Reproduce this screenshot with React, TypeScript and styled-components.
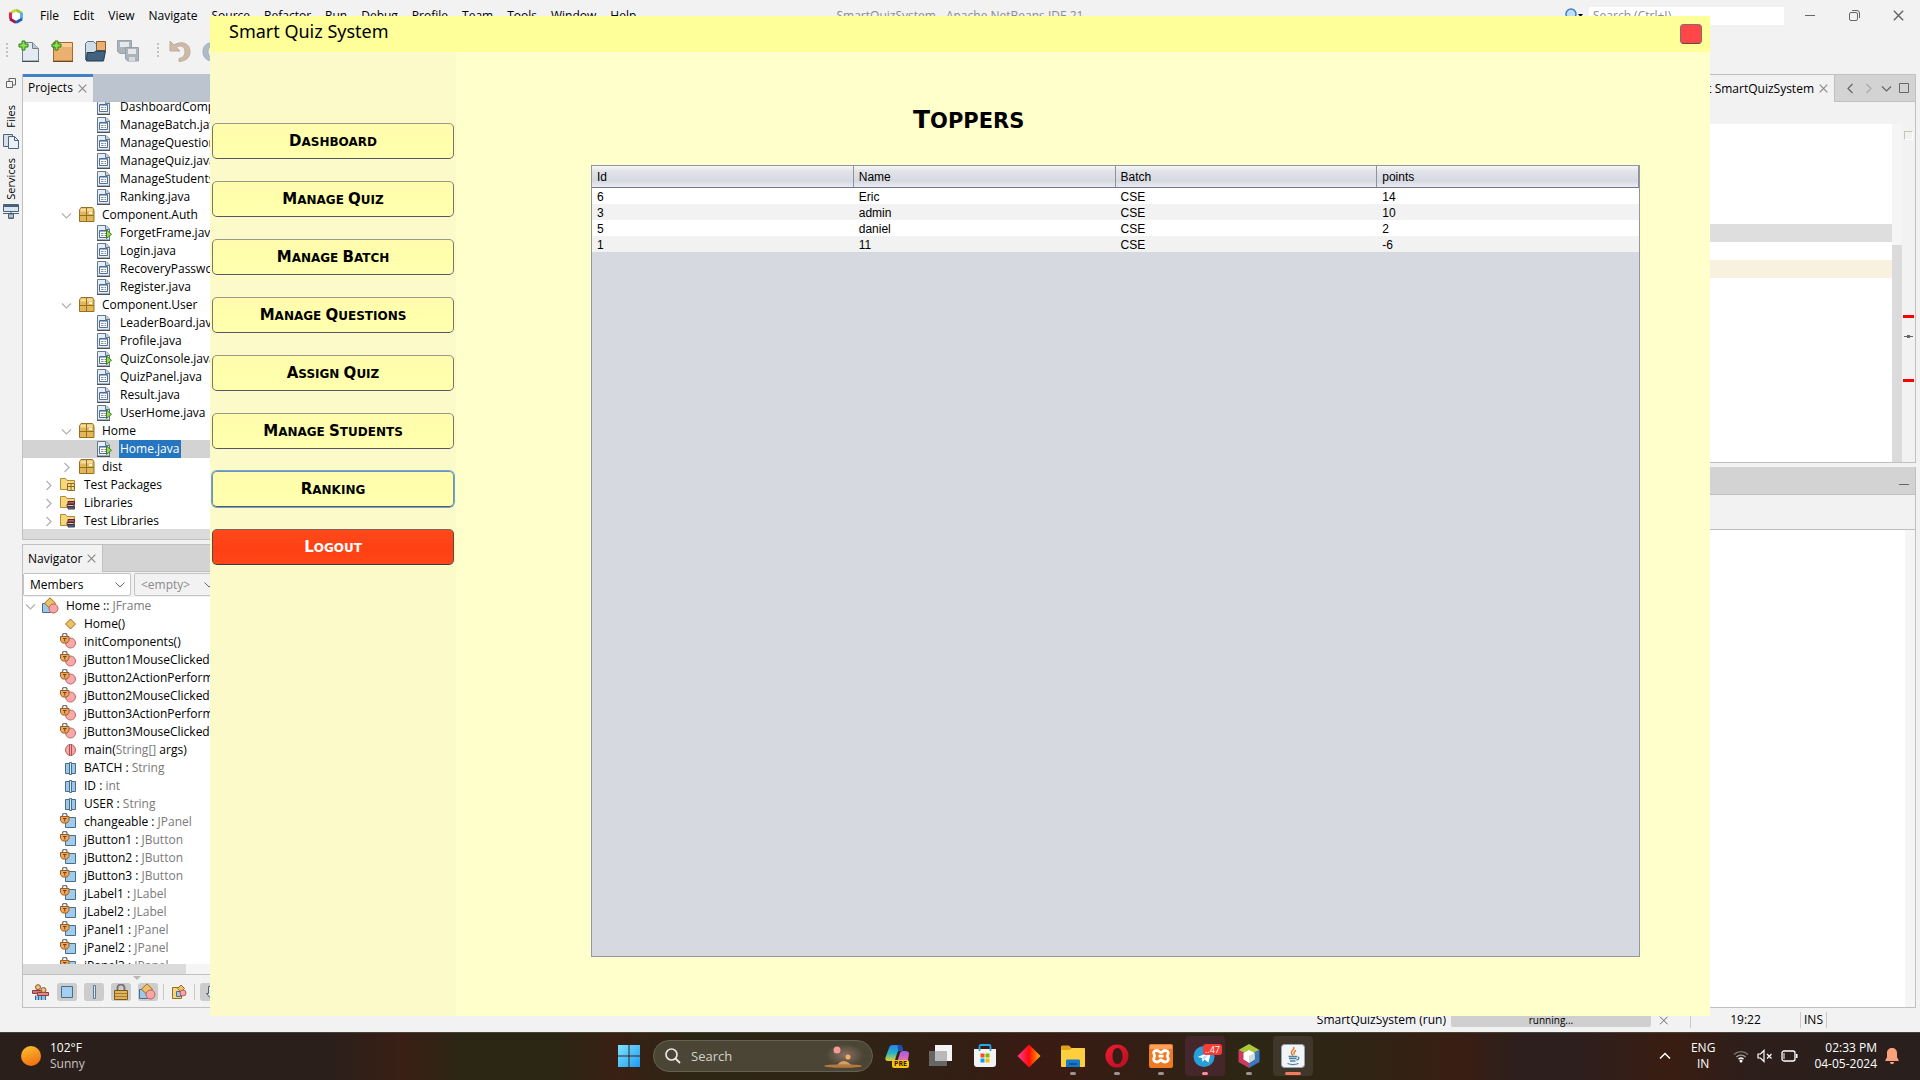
import React from "react";
import styled, { createGlobalStyle, css } from "styled-components";

const Global = createGlobalStyle`
  * { box-sizing: border-box; }
  html, body { margin: 0; }
  body {
    font-family: "Open Sans", "Noto Sans", sans-serif;
    font-size: 12px;
    line-height: 18px;
    color: #000;
    background: #f2f2f2;
  }
  button, input, select { font: inherit; color: inherit; margin: 0; }
  button { padding: 0; border: 0; background: none; }
  ul { list-style: none; margin: 0; padding: 0; }
  svg { display: block; flex: none; }
`;

/* ---------- shell ---------- */

const Desktop = styled.div`
  position: relative;
  display: flex;
  flex-direction: column;
  height: 100vh;
  min-height: 640px;
  overflow: hidden;
`;

const MenuBar = styled.header`
  display: grid;
  grid-template-columns: 1fr auto 1fr;
  align-items: center;
  height: 31px;
  flex: none;
`;

const MenuGroup = styled.nav`
  display: flex;
  align-items: center;
  gap: 14px;
  padding-left: 8px;
  & > svg { margin-right: 2px; }
`;

const MenuItem = styled.button`
  white-space: nowrap;
`;

const AppTitle = styled.span`
  color: #8c8c8c;
  white-space: pre;
`;

const MenuRight = styled.div`
  display: flex;
  align-items: center;
  justify-content: flex-end;
  height: 31px;
`;

const IdeSearch = styled.input`
  width: 195px;
  height: 18px;
  margin: 0 4px 0 5px;
  padding: 0 4px;
  border: 0;
  background: #fff;
  &::placeholder { color: #8c8c8c; opacity: 1; }
`;

const WindowControl = styled.button`
  display: grid;
  place-items: center;
  width: 44px;
  height: 30px;
`;

const ToolBar = styled.div`
  display: flex;
  align-items: center;
  gap: 9px;
  height: 43px;
  flex: none;
  padding: 0 0 4px 6px;
`;

const ToolButton = styled.button<{ $dim?: boolean }>`
  display: grid;
  place-items: center;
  width: 24px;
  height: 24px;
  opacity: ${(p) => (p.$dim ? 0.6 : 1)};
`;

const Grip = styled.span<{ $lead?: boolean }>`
  width: 2px;
  height: 16px;
  margin-left: ${(p) => (p.$lead ? "8px" : "0")};
  background: repeating-linear-gradient(#c2c2c2 0 2px, transparent 2px 4px);
`;

const Body = styled.div`
  display: flex;
  flex: 1;
  min-height: 0;
  padding-right: 4px;
`;

const SideStrip = styled.div`
  display: flex;
  flex-direction: column;
  align-items: center;
  width: 22px;
  flex: none;
  padding-top: 4px;
  & > svg { margin-bottom: 8px; }
`;

const SideTab = styled.button`
  display: flex;
  flex-direction: column;
  align-items: center;
  gap: 5px;
  margin-top: 9px;
`;

const SideLabel = styled.span`
  font-size: 11px;
  writing-mode: vertical-rl;
  transform: rotate(180deg);
`;

const LeftDock = styled.div`
  display: grid;
  grid-template-rows: 466fr 464fr;
  gap: 4px;
  width: 20%;
  flex: none;
`;

const RightDock = styled.div`
  display: grid;
  grid-template-rows: 389fr 541fr;
  gap: 4px;
  flex: 1;
  margin-left: 5px;
`;

const Panel = styled.section<{ $topLine?: boolean }>`
  display: flex;
  flex-direction: column;
  min-height: 0;
  overflow: hidden;
  border: 1px solid #c0c0c0;
  border-top-width: ${(p) => (p.$topLine ? "1px" : "0")};
`;

const TabStrip = styled.div<{ $active?: boolean; $end?: boolean; $short?: boolean }>`
  display: flex;
  justify-content: ${(p) => (p.$end ? "flex-end" : "flex-start")};
  height: ${(p) => (p.$short ? "27px" : "28px")};
  flex: none;
  background: ${(p) => (p.$active ? "#bcc5cf" : "#d3d3d3")};
  border-bottom: 1px solid #c0c0c0;
`;

const Tab = styled.div<{ $active?: boolean }>`
  display: flex;
  align-items: center;
  gap: 5px;
  padding: 0 6px 0 5px;
  background: #f2f2f2;
  border-right: 1px solid #c0c0c0;
  white-space: nowrap;
  margin-bottom: -1px;
  ${(p) => p.$active && css`box-shadow: inset 0 3px #3f83c6;`}
`;

const TabActions = styled.div`
  display: flex;
  align-items: center;
  gap: 7px;
  padding: 0 6px 0 10px;
`;

const Tree = styled.ul<{ $scrolled?: boolean }>`
  flex: 1;
  min-height: 0;
  overflow: hidden;
  background: #fff;
  & > li:first-child { margin-top: ${(p) => (p.$scrolled ? "-4px" : "0")}; }
`;

const TreeRow = styled.li<{ $level: number; $selected?: boolean }>`
  display: flex;
  align-items: center;
  height: 18px;
  padding-left: ${(p) => p.$level * 18}px;
  white-space: nowrap;
  background: ${(p) => (p.$selected ? "#d3d3d3" : "transparent")};
`;

const Twisty = styled.span`
  display: grid;
  place-items: center;
  width: 15px;
  margin-right: 4px;
`;

const RowIcon = styled.span`
  width: 18px;
  margin-right: 5px;
`;

const RowLabel = styled.span<{ $selected?: boolean }>`
  padding: 0 2px 0 1px;
  ${(p) => p.$selected && css`background: #2675bf; color: #fff;`}
`;

const Muted = styled.span`
  color: #7a7a7a;
`;

const HScroll = styled.div<{ $full?: boolean }>`
  height: 10px;
  flex: none;
  background: linear-gradient(#dbdbdb, #dbdbdb) 0 0 / ${(p) => (p.$full ? "100%" : "163px")} 10px no-repeat #f5f5f5;
`;

const FilterRow = styled.div`
  display: flex;
  gap: 3px;
  padding: 1px 0;
  flex: none;
`;

const Combo = styled.select`
  appearance: none;
  width: 108px;
  height: 23px;
  padding: 0 6px;
  border: 1px solid #c4c4c4;
  border-radius: 2px;
  background: #fff url("data:image/svg+xml,%3Csvg xmlns='http://www.w3.org/2000/svg' width='10' height='6'%3E%3Cpath d='M.5.5 5 5 9.500 .5' fill='none' stroke='%23666'/%3E%3C/svg%3E") right 5px center no-repeat;
  &:disabled {
    background-color: #f2f2f2;
    color: #8c8c8c;
    opacity: 1;
    width: 86px;
  }
`;

const FilterBar = styled.div`
  position: relative;
  display: flex;
  align-items: center;
  gap: 7px;
  height: 33px;
  flex: none;
  padding: 2px 0 0 7px;
  border-top: 1px solid #c0c0c0;
`;

const SplitterMark = styled.span`
  position: absolute;
  top: 1px;
  left: 110px;
  border: 4px solid transparent;
  border-top-color: #b8b8b8;
  border-bottom: 0;
`;

const FilterButton = styled.button<{ $on?: boolean }>`
  display: grid;
  place-items: center;
  width: 20px;
  height: 18px;
  border-radius: 3px;
  background: ${(p) => (p.$on ? "#cccccc" : "transparent")};
`;

const Divider = styled.span<{ $tight?: boolean }>`
  width: 1px;
  height: 16px;
  margin: 0 ${(p) => (p.$tight ? "-2px" : "0")};
  background: #c9c9c9;
`;

const EditorToolbar = styled.div<{ $tall?: boolean }>`
  height: ${(p) => (p.$tall ? "35px" : "22px")};
  flex: none;
  border-bottom: ${(p) => (p.$tall ? "1px solid #c0c0c0" : "0")};
`;

const EditorArea = styled.div`
  display: flex;
  flex: 1;
  min-height: 0;
`;

const CodeSheet = styled.div`
  flex: 1;
  padding-top: 100px;
  background: #fff;
`;

const CodeLine = styled.div<{ $tone?: string }>`
  height: 18px;
  background: ${(p) => p.$tone || "transparent"};
`;

const VScroll = styled.div<{ $thumb?: boolean }>`
  width: 10px;
  background: #f5f5f5;
  padding-top: 121px;
  &::after {
    content: "";
    display: ${(p) => (p.$thumb ? "block" : "none")};
    height: 100%;
    background: #dbdbdb;
  }
`;

const ErrorStripe = styled.div`
  display: flex;
  flex-direction: column;
  align-items: center;
  width: 13px;
  padding-top: 7px;
`;

const StripeBox = styled.span`
  width: 9px;
  height: 9px;
  margin-bottom: 175px;
  border: 1px solid #c9c5b4;
  border-right-color: #fff;
  border-bottom-color: #fff;
`;

const StripeMark = styled.span`
  width: 11px;
  height: 3px;
  background: #ff0000;
`;

const CaretMark = styled.span`
  width: 9px;
  height: 1px;
  margin: 18px 0 42px;
  background: #666;
  &::after {
    content: "";
    display: block;
    width: 3px;
    height: 3px;
    margin: -1px auto;
    background: #666;
  }
`;

const StatusBar = styled.footer`
  display: flex;
  align-items: center;
  justify-content: flex-end;
  height: 24px;
  flex: none;
  padding: 0 93px 0 0;
`;

const Progress = styled.div`
  width: 200px;
  height: 14px;
  margin: 0 7px 0 5px;
  border-radius: 2px;
  background: #cfcfcf;
  font-size: 10px;
  line-height: 14px;
  text-align: center;
`;

const StatusCell = styled.span<{ $w: number }>`
  width: ${(p) => p.$w}px;
  height: 16px;
  line-height: 16px;
  text-align: center;
  border-left: 1px solid #c9c9c9;
`;

/* ---------- quiz window ---------- */

const QuizWindow = styled.main`
  position: absolute;
  top: 16px;
  right: 210px;
  bottom: 64px;
  left: 210px;
  display: flex;
  flex-direction: column;
  background: #ffffcc;
`;

const QuizTitleBar = styled.header`
  display: flex;
  justify-content: space-between;
  height: 36px;
  flex: none;
  padding: 0 8px 0 19px;
  background: #ffff99;
`;

const QuizTitle = styled.span`
  font-family: "Noto Sans", sans-serif;
  font-size: 18px;
  line-height: 30px;
`;

const CloseBox = styled.button`
  width: 22px;
  height: 20px;
  margin-top: 8px;
  border: 1px solid #8a6a70;
  border-bottom-color: #5a4a50;
  border-radius: 4px;
  background: #ff4747;
`;

const QuizBody = styled.div`
  display: flex;
  flex: 1;
  min-height: 0;
`;

const QuizNav = styled.nav`
  display: flex;
  flex-direction: column;
  gap: 22px;
  width: 246px;
  flex: none;
  padding: 71px 2px 0;
  background: #fcfac8;
`;

const NavButton = styled.button<{ $danger?: boolean; $focused?: boolean }>`
  height: 36px;
  padding-top: 1px;
  border: 1px solid #6b6b6b;
  border-color: #9a9a86 #77776c #55585e;
  border-radius: 5px;
  background: linear-gradient(#fffcae, #ffffab 50%, #ffffb0);
  font-family: "DejaVu Sans", sans-serif;
  font-size: 12px;
  font-weight: 700;
  line-height: 33px;
  text-transform: uppercase;
  ${(p) =>
    p.$focused &&
    css`
      border-color: #6f94b8 #6f94b8 #55585e;
      box-shadow: 0 0 0 1px #73a4d1;
    `}
  ${(p) =>
    p.$danger &&
    css`
      color: #fff;
      border-color: #77655c #5d4743 #3c3c44;
      background: linear-gradient(#ff4a1c, #ff4013 60%, #ff4719);
    `}
`;

const Word = styled.span<{ $cap: number }>`
  display: inline-block;
  &::first-letter { font-size: ${(p) => p.$cap}px; }
`;

const QuizMain = styled.section`
  display: flex;
  flex-direction: column;
  flex: 1;
  min-width: 0;
  padding: 53px 70px 59px 135px;
`;

const Heading = styled.h1`
  margin: 0 0 30px;
  padding-left: 322px;
  font-family: "DejaVu Sans", sans-serif;
  font-size: 21px;
  font-weight: 700;
  line-height: 30px;
  text-transform: uppercase;
  height: 30px;
`;

const TableView = styled.div`
  flex: 1;
  border: 1px solid #9297a1;
  background: #d6d9e0;
`;

const Table = styled.table`
  width: 100%;
  table-layout: fixed;
  border-collapse: separate;
  border-spacing: 0;
  font-family: "Liberation Sans", Arial, sans-serif;
  font-size: 12px;
`;

const Th = styled.th`
  height: 22px;
  padding: 0 5px;
  border-right: 1px solid #8d929c;
  border-bottom: 1px solid #73768a;
  background: linear-gradient(#f6f7f9, #e1e3e8 25%, #d6d9e0 70%, #e9ecf2);
  font-weight: 400;
  line-height: 20px;
  text-align: left;
`;

const Tr = styled.tr`
  background: #fff;
  &:nth-child(even) { background: #f2f2f2; }
`;

const Td = styled.td`
  height: 16px;
  padding: 2px 5px 0;
  line-height: 14px;
`;

/* ---------- taskbar ---------- */

const TaskBar = styled.footer`
  display: grid;
  grid-template-columns: 1fr auto 1fr;
  align-items: center;
  height: 48px;
  flex: none;
  box-shadow: inset 0 1px #48423d;
  color: #fff;
  line-height: 16px;
  background: linear-gradient(90deg, #2a1f1b 0, #2b1f1b 17%, #3a1f15 21%, #2c2615 24%, #2c2615 29%, #3a2014 32%, #2d2615 36%, #2f2415 44%, #331f14 50%, #3a1b14 54%, #331f15 60%, #2d2615 65%, #2f2415 71%, #3a1e13 76%, #2d1f1d 79%, #2d1f1d 82%, #3a1d12 87%, #2d1f1b 91%, #291f1d 100%);
`;

const Weather = styled.button`
  display: flex;
  align-items: center;
  gap: 9px;
  padding-left: 21px;
  text-align: left;
`;

const Sun = styled.span`
  width: 20px;
  height: 20px;
  border-radius: 50%;
  background: linear-gradient(160deg, #f8c331, #f4650c);
`;

const Lines = styled.span<{ $align?: string; $dim?: boolean }>`
  display: flex;
  flex-direction: column;
  text-align: ${(p) => p.$align || "left"};
  & > span:last-child { color: ${(p) => (p.$dim ? "#c9c4c1" : "inherit")}; }
`;

const TaskIcons = styled.div`
  display: flex;
  align-items: center;
  gap: 4px;
  padding-left: 2px;
`;

const TaskButton = styled.button<{ $tone?: string }>`
  position: relative;
  display: grid;
  place-items: center;
  width: 40px;
  height: 40px;
  border-radius: 4px;
  background: ${(p) => p.$tone || "transparent"};
`;

const RunDot = styled.span<{ $tone?: string; $wide?: boolean }>`
  position: absolute;
  bottom: 1px;
  left: 50%;
  width: ${(p) => (p.$wide ? "16px" : "6px")};
  margin-left: ${(p) => (p.$wide ? "-8px" : "-3px")};
  height: 3px;
  border-radius: 2px;
  background: ${(p) => p.$tone || "#9b9490"};
`;

const Badge = styled.span`
  position: absolute;
  top: 8px;
  right: 3px;
  height: 11px;
  padding: 0 2px;
  border-radius: 3px;
  background: #f23c34;
  font-size: 9px;
  line-height: 11px;
`;

const PreBadge = styled.span`
  position: absolute;
  right: 8px;
  bottom: 8px;
  height: 8px;
  padding: 0 2px;
  border-radius: 2px;
  background: #fcc312;
  color: #2a2000;
  font-size: 7px;
  font-weight: 700;
  line-height: 8px;
`;

const TaskSearch = styled.label`
  display: flex;
  align-items: center;
  gap: 10px;
  width: 220px;
  height: 32px;
  padding: 0 8px 0 11px;
  border: 1px solid #666052;
  border-radius: 16px;
  background: #4a4535;
`;

const TaskSearchInput = styled.input`
  flex: 1;
  min-width: 0;
  border: 0;
  padding: 0;
  background: transparent;
  outline: 0;
  font-size: 13px;
  &::placeholder { color: #d5d2cb; opacity: 1; }
`;

const Tray = styled.div`
  display: flex;
  align-items: center;
  justify-content: flex-end;
  padding-right: 21px;
`;

const TrayGroup = styled.div`
  display: flex;
  align-items: center;
  gap: 8px;
  margin: 0 16px 0 18px;
`;

const TrayLang = styled(Lines)`
  margin-left: 20px;
`;

const Bell = styled.span`
  margin-left: 8px;
`;

/* ---------- drawings ---------- */

const stroke = { fill: "none", stroke: "#666", strokeWidth: 1 };

const Cross = ({ size = 9, color = "#8a8a8a" }: { size?: number; color?: string }) => (
  <svg width={size} height={size} viewBox="0 0 9 9">
    <path d="M.7.7l7.600 7.600M8.300.7L.7 8.300" fill="none" stroke={color} strokeWidth="1.200" />
  </svg>
);

const Chevron = ({ dir, color = "#b0b0b0" }: { dir: "down" | "right" | "left"; color?: string }) => {
  const d = { down: "M1 3.500l4.500 4.500 4.500-4.500", right: "M3.500 1l4.500 4.500-4.500 4.500", left: "M7.500 1L3 5.500 7.500 10" }[dir];
  return (
    <svg width="11" height="11" viewBox="0 0 11 11">
      <path d={d} fill="none" stroke={color} strokeWidth="1.200" />
    </svg>
  );
};

const NetBeansMark = ({ size = 16 }: { size?: number }) => (
  <svg width={size} height={size} viewBox="0 0 16 16">
    <path d="M8 2L13.500 5" stroke="#a6c738" strokeWidth="3" />
    <path d="M8 2L2.500 5" stroke="#c5dc3a" strokeWidth="3" />
    <path d="M2.500 4.500V11" stroke="#e0235c" strokeWidth="3" />
    <path d="M2 11l6 3.500" stroke="#9b1850" strokeWidth="3" />
    <path d="M13.500 4.500V11" stroke="#54b3ee" strokeWidth="3" />
    <path d="M14 11l-6 3.500" stroke="#1d5fb8" strokeWidth="3" />
    <path d="M8 4l4 2v4l-4 2.500L4 10V6z" fill="#fff" />
  </svg>
);

const Plus = () => (
  <path d="M4 1h3v3h3v3H7v3H4V7H1V4h3z" fill="#8ae052" stroke="#2f7d12" />
);

const NewFileIcon = () => (
  <svg width="22" height="22" viewBox="0 0 22 22">
    <path d="M4.500 2.500h10l6 6v12.500h-16z" fill="#e3eaf1" stroke="#73808c" />
    <path d="M14.500 2.500v6h6" fill="#b8c9d8" stroke="#73808c" />
    <path d="M4 21.500h17" stroke="#454f58" />
    <Plus />
  </svg>
);

const NewProjectIcon = () => (
  <svg width="22" height="22" viewBox="0 0 22 22">
    <path d="M2.500 2.500h19v18.500h-19z" fill="#eab06f" stroke="#a9682b" />
    <path d="M3 3h18v4H3z" fill="#f4cf98" />
    <path d="M2 21.500h20" stroke="#6b4520" />
    <Plus />
  </svg>
);

const OpenIcon = () => (
  <svg width="22" height="22" viewBox="0 0 22 22">
    <path d="M1.500 20V3.500l2-2h6l2 2h3V14" fill="#cfdde8" stroke="#5b7285" />
    <path d="M12.500 1.500h9v9h-9z" fill="#eab06f" stroke="#8a5a2b" />
    <path d="M3 12.500h7l2-1.500h9.500l-2 10h-17z" fill="#41637f" stroke="#1e3950" />
  </svg>
);

const SaveAllIcon = () => (
  <svg width="22" height="22" viewBox="0 0 22 22">
    <path d="M.5.5h14v13H3l-2.500-2z" fill="#7d8c99" stroke="#5f6c78" />
    <path d="M3 2h9v5H3z" fill="#dfe3e6" />
    <path d="M8.500 7.500h13v13.500H11l-2.500-2z" fill="#7d8c99" stroke="#5f6c78" />
    <path d="M11 9h8v5h-8z" fill="#dfe3e6" />
    <path d="M12 17h6v4h-6z" fill="#c3cad0" />
  </svg>
);

const UndoIcon = ({ flip }: { flip?: boolean }) => (
  <svg width="22" height="22" viewBox="0 0 22 22">
    <g transform={flip ? "translate(22 0) scale(-1 1)" : undefined}>
      <path d="M1 1v10h10L7.500 7.500C12 4 16 7 16 11.500c0 4-2 6-6 7v3c7-.5 11-4 11-10C21 3 12 .5 5 5z" fill={flip ? "#7e99ae" : "#b59878"} stroke={flip ? "#6a8295" : "#9a7d5c"} />
    </g>
  </svg>
);

const FilesIcon = () => (
  <svg width="16" height="16" viewBox="0 0 16 16">
    <path d="M.5 1.500h9v12h-9z" fill="#d5e0ea" stroke="#4f6577" />
    <path d="M5.500 3.500h6l4 4v8h-10z" fill="#e8eff5" stroke="#4f6577" />
    <path d="M11.500 3.500v4h4" fill="none" stroke="#4f6577" />
  </svg>
);

const ServicesIcon = () => (
  <svg width="16" height="16" viewBox="0 0 16 16">
    <path d="M.5.5h15v7H.5z" fill="#dce5ed" stroke="#46637a" />
    <path d="M1 1h14v2H1z" fill="#46637a" />
    <path d="M0 9.500h16M8 7v6M5 11.500h6M5.500 14.500h5" stroke="#46637a" />
    <path d="M5.500 10h5v4h-5z" fill="#b4c6d5" stroke="#46637a" />
  </svg>
);

type IconKind =
  | "java" | "main" | "package" | "testFolder" | "libFolder"
  | "class" | "ctor" | "privMethod" | "staticMethod" | "staticField" | "privField";

const Lock = () => (
  <>
    <path d="M2.500 4.500V2.500a2 2 0 014.500 0V4.500" fill="none" stroke="#767676" strokeWidth="1.300" />
    <path d="M.5 3.500h8.500v4l-2 2.500h-4.500l-2-2.500z" fill="#eba765" stroke="#9a5f14" />
    <path d="M3 5.500h3.500M4.750 5.500v3" stroke="#7c3f10" />
  </>
);

const TreeIcon = ({ kind }: { kind: IconKind }) => {
  let body: React.ReactNode = null;
  if (kind === "java" || kind === "main") {
    body = (
      <>
        <path d="M1.500 1.500h8.500l3.500 3.500v11h-12z" fill="#e6edf3" stroke="#66798a" />
        <path d="M9.500 1.500v4h4" fill="#c4d3e0" stroke="#66798a" />
        <path d="M3.500 6.500h8v7h-8z" fill="#fff" stroke="#4c6f99" />
        <path d="M4 7.500h7" stroke="#8fb2d6" />
        <path d="M5 9.500h2.500M8.500 9.500H10M5 11.500h2.500M8.500 11.500H10" stroke="#8a8a8a" />
        <path d="M1 16.500h13" stroke="#49545e" />
        {kind === "main" && <path d="M10.500 6v8.500l5-4.200z" fill="#8fdc5a" stroke="#3a7d1a" />}
      </>
    );
  } else if (kind === "package") {
    body = (
      <>
        <path d="M1.500 4l1.500-2.500h11.500l1.500 2.500v11.500h-14.500z" fill="#e2b659" stroke="#94701f" />
        <path d="M2.500 2.500h12v3h-12z" fill="#f4dc9f" />
        <path d="M8.500 2v13M1.500 9.500H16" stroke="#94701f" />
        <path d="M11 6h3v2h-3z" fill="#fff6da" />
      </>
    );
  } else if (kind === "testFolder" || kind === "libFolder") {
    body = (
      <>
        <path d="M.5 13.500v-11h5l1.500 2h7.500v9z" fill="#f7d67c" stroke="#b28a30" />
        {kind === "testFolder" ? (
          <>
            <path d="M7.500 7.500h7v7h-7z" fill="#f6dc96" stroke="#8a6a1c" />
            <path d="M11 7v8M7 10.500h8" stroke="#8a6a1c" />
          </>
        ) : (
          <>
            <path d="M8 7.500h6.500v2.500H8z" fill="#c2566a" stroke="#4c2a36" />
            <path d="M7 10.500h7v2H7z" fill="#e2c7a0" stroke="#4c2a36" />
            <path d="M8 13h6.500v2H8z" fill="#65739a" stroke="#333b59" />
          </>
        )}
      </>
    );
  } else if (kind === "class") {
    body = (
      <>
        <path d="M.5 6.500h8v9h-8z" fill="#9cc8ec" stroke="#4a6c88" />
        <path d="M8 .8l5.500 5.400L8 11.600 2.500 6.200z" fill="#ecc067" stroke="#9a6d17" />
        <circle cx="11.500" cy="11.500" r="4.500" fill="#f9a5a5" stroke="#bd5c5c" />
      </>
    );
  } else if (kind === "ctor") {
    body = <path d="M10.500 4l5 5-5 5-5-5z" fill="#ecc067" stroke="#9a6d17" />;
  } else if (kind === "privMethod") {
    body = (
      <>
        <circle cx="10.500" cy="10" r="5" fill="#f9a9a9" stroke="#b66" />
        <Lock />
      </>
    );
  } else if (kind === "staticMethod") {
    body = (
      <>
        <ellipse cx="10.500" cy="9" rx="5" ry="5.500" fill="#f9a5a5" stroke="#b66" />
        <path d="M9.500 3v12M11.500 3v12" stroke="#a25555" />
      </>
    );
  } else if (kind === "staticField") {
    body = (
      <>
        <path d="M5.500 4.500h4v10h-4zM11.500 4.500h4v10h-4z" fill="#9cc8ec" stroke="#4a6c88" />
        <path d="M9.500 3.500h2v12h-2z" fill="#d7e9f7" stroke="#4a6c88" />
      </>
    );
  } else {
    body = (
      <>
        <path d="M5.500 4.500h10v10h-10z" fill="#9fcbee" stroke="#4a6c88" />
        <Lock />
      </>
    );
  }
  return <svg width="18" height="18" viewBox="0 0 18 18">{body}</svg>;
};

const InheritIcon = () => (
  <svg width="17" height="17" viewBox="0 0 17 17">
    <path d="M3 11h11v5H3z" fill="#8fc1ea" />
    <path d="M3.500 12v4M6.500 12v4M9.500 12v4M13.500 12v4" stroke="#3d678a" />
    <path d="M.5 6.500h10v3H.5z" fill="#d97474" stroke="#8d3c3c" />
    <path d="M5.500 8.500h11v3h-11z" fill="#e08a8a" stroke="#8d3c3c" />
    <circle cx="6" cy="3.200" r="2.500" fill="#eebf86" stroke="#8a5a26" />
    <circle cx="11.500" cy="6" r="2.500" fill="#eebf86" stroke="#8a5a26" />
  </svg>
);

const PadlockIcon = () => (
  <svg width="16" height="17" viewBox="0 0 16 17">
    <path d="M4.500 7V4a3.500 3.500 0 017 0v3" fill="none" stroke="#777" strokeWidth="2" />
    <path d="M1.500 6.500h13v9h-13z" fill="#e0b35a" stroke="#7f5a14" />
    <path d="M2 9.500h12M2 12.500h12" stroke="#a97c2b" />
  </svg>
);

const SquareIcon = () => (
  <svg width="12" height="12" viewBox="0 0 12 12"><path d="M.5.5h11v11H.5z" fill="#a5cff0" stroke="#4a6c88" /></svg>
);

const BarIcon = () => (
  <svg width="5" height="14" viewBox="0 0 5 14"><path d="M1.500.5h2v13h-2z" fill="#d7e9f7" stroke="#5b7b95" /></svg>
);

const SortClassIcon = () => (
  <svg width="16" height="16" viewBox="0 0 16 16">
    <path d="M1.500 3.500h9v11h-9z" fill="#f3d489" stroke="#9a6d17" />
    <path d="M5.500 7.500h4v5h-4z" fill="#9cc8ec" stroke="#4a6c88" />
    <path d="M10 1l3.500 3.500L10 8 6.500 4.500z" fill="#ecc067" stroke="#9a6d17" />
    <circle cx="12" cy="9" r="3" fill="#f9a5a5" stroke="#bd5c5c" />
  </svg>
);

const ArrowDownIcon = () => (
  <svg width="10" height="14" viewBox="0 0 10 14">
    <path d="M3.500 1.500h3v7h2l-3.500 4-3.500-4h2z" fill="#dfe9f1" stroke="#46637a" />
  </svg>
);

const StartIcon = () => (
  <svg width="24" height="24" viewBox="0 0 24 24">
    <defs>
      <linearGradient id="win" x1="0" y1="0" x2="1" y2="1" gradientUnits="objectBoundingBox">
        <stop offset="0" stopColor="#7fe3ff" /><stop offset="1" stopColor="#1c9bf5" />
      </linearGradient>
    </defs>
    <path d="M1 1h10.500v10.500H1zM12.500 1H23v10.500H12.500zM1 12.500h10.500V23H1zM12.500 12.500H23V23H12.500z" fill="url(#win)" />
  </svg>
);

const SearchArt = () => (
  <svg width="46" height="28" viewBox="0 0 46 28">
    <defs>
      <radialGradient id="haze"><stop offset="0" stopColor="#8a7064" /><stop offset="1" stopColor="#8a7064" stopOpacity="0" /></radialGradient>
    </defs>
    <ellipse cx="27" cy="13" rx="19" ry="11" fill="url(#haze)" />
    <circle cx="19" cy="8" r="3.500" fill="#f69a96" />
    <circle cx="30" cy="15" r="2.500" fill="#f3b060" />
    <path d="M19 24c1-3 4-5 7-5s6 3 9 5z" fill="#d6a062" />
    <ellipse cx="25" cy="24" rx="19" ry="1.800" fill="#b5793f" />
  </svg>
);

const CopilotIcon = () => (
  <svg width="24" height="24" viewBox="0 0 24 24">
    <defs>
      <linearGradient id="cpa" x1="0" y1="0" x2="0" y2="1"><stop offset="0" stopColor="#2b7fe8" /><stop offset=".5" stopColor="#22b5c4" /><stop offset="1" stopColor="#e6cf2e" /></linearGradient>
      <linearGradient id="cpb" x1="0" y1="0" x2="0" y2="1"><stop offset="0" stopColor="#a05ce8" /><stop offset="1" stopColor="#f06fa8" /></linearGradient>
    </defs>
    <path d="M7.500 1h7c2 0 2.500 1 3 3.500l.5 2h-2.500c-2 0-3 1-3.500 3l-1.500 5c-.5 2-1 2.500-3 2.500H3c-2.500 0-3-1.500-2.500-3.500L4 4c.7-2 1.500-3 3.500-3z" fill="url(#cpa)" />
    <path d="M12.500 1h2c2 0 2.500 1 3 3.500l.5 2h-2.500c-1 0-1.700.3-2.300.8z" fill="#1b4fb5" />
    <path d="M18 7h2.500c3 0 3.800 1.500 3.300 4l-1 6H12.500l2.500-8c.3-1 1-2 3-2z" fill="url(#cpb)" />
  </svg>
);

const TaskViewIcon = () => (
  <svg width="24" height="24" viewBox="0 0 24 24">
    <path d="M6 1h17v16H6z" fill="#f4f4f4" />
    <path d="M0 7h18v15H0z" fill="#6e6e6e" opacity=".9" />
    <path d="M6 7h12v10H6z" fill="#b9b9b9" />
  </svg>
);

const StoreIcon = () => (
  <svg width="24" height="24" viewBox="0 0 24 24">
    <path d="M1 5h22v15c0 2-1 3-3 3H4c-2 0-3-1-3-3z" fill="#f3f3f3" />
    <path d="M6.500 7V2.500C6.500 1.500 7 1 8 1h8c1 0 1.500.5 1.500 1.500V7" fill="none" stroke="#25a7e8" strokeWidth="1.800" />
    <path d="M7.500 9.500h4v4h-4z" fill="#f25022" /><path d="M12.500 9.500h4v4h-4z" fill="#7fba00" />
    <path d="M7.500 14.500h4v4h-4z" fill="#00a4ef" /><path d="M12.500 14.500h4v4h-4z" fill="#ffb900" />
  </svg>
);

const DiamondIcon = () => (
  <svg width="24" height="24" viewBox="0 0 24 24">
    <defs><linearGradient id="dia"><stop offset="0" stopColor="#ff3c9a" /><stop offset=".5" stopColor="#ff0a0a" /><stop offset="1" stopColor="#ffb300" /></linearGradient></defs>
    <path d="M12 .5L23.500 12 12 23.500.5 12z" fill="url(#dia)" />
  </svg>
);

const FolderIcon = () => (
  <svg width="24" height="24" viewBox="0 0 24 24">
    <path d="M0 3c0-1 .5-1.500 1.500-1.500H8L10.500 4H23v8H0z" fill="#e0a31a" />
    <path d="M0 6h9l2-2h12c.6 0 1 .4 1 1v17c0 .6-.4 1-1 1H1c-.6 0-1-.4-1-1z" fill="#fbcf3e" />
    <path d="M5 23v-6c0-1 .7-1.500 1.500-1.500h11c.8 0 1.500.5 1.500 1.500v6z" fill="#1878c9" />
    <path d="M8 20h8" stroke="#0d569a" strokeWidth="2" />
  </svg>
);

const OperaIcon = () => (
  <svg width="24" height="24" viewBox="0 0 24 24">
    <defs><linearGradient id="op" x1="0" y1="0" x2="1" y2="1"><stop offset="0" stopColor="#f51c2f" /><stop offset="1" stopColor="#b01020" /></linearGradient></defs>
    <path d="M14 1c5 1 9 5.500 9 11s-4 10-9 11c3-1.500 5.500-5.500 5.500-11S17 2.500 14 1z" fill="#e8626b" />
    <path fillRule="evenodd" d="M12 .5A11.500 11.500 0 1012 23.500 11.500 11.500 0 0012 .5zM12.500 4C15.500 4 17.500 7.500 17.500 12s-2 8-5 8-5-3.500-5-8 2-8 5-8z" fill="url(#op)" />
  </svg>
);

const XamppIcon = () => (
  <svg width="24" height="24" viewBox="0 0 24 24">
    <rect width="24" height="24" rx="2" fill="#f07a22" />
    <rect x="1" y="1" width="22" height="4" fill="#f8a15c" />
    <path d="M8 6.500c-3 0-4 2-3 3.500s1 2.500 0 4 0 4 3 4 2.500-2 4-2 1 2 4 2 4-2.500 3-4-1-2.500 0-4-.5-3.500-3-3.500-2.500 2-4 2-1.500-2-4-2zM9.500 12.200h5" fill="none" stroke="#fff" strokeWidth="2.800" />
  </svg>
);

const TelegramIcon = () => (
  <svg width="24" height="24" viewBox="0 0 24 24">
    <circle cx="11" cy="12.500" r="10.500" fill="#279fd8" />
    <path d="M4.500 13L18 7.500 15.500 18.500 11.500 15.500 9.500 18 9 14z" fill="#fff" />
    <path d="M9 14l7-5-4.500 6.500z" fill="#b9dcef" />
  </svg>
);

const CubeIcon = () => (
  <svg width="24" height="24" viewBox="0 0 24 24">
    <path d="M12 0l10.500 6L12 11.500 1.500 6z" fill="#a9c83c" />
    <path d="M1.500 6L7 8.500V16l5 3v5L1.500 18z" fill="#cc3a5c" />
    <path d="M22.500 6L17 8.500V16l-5 3v5l10.500-6z" fill="#3a79c2" />
    <path d="M12 6l5.500 3v6.500L12 19l-5.500-3.500V9z" fill="#fff" />
    <path d="M12 12l5.500-3v6.500L12 19z" fill="#d4dcd3" />
  </svg>
);

const JavaIcon = () => (
  <svg width="24" height="24" viewBox="0 0 24 24">
    <rect x=".5" y=".5" width="23" height="23" rx="3" fill="#f2f5f8" stroke="#93a5b5" />
    <path d="M12.500 3c2 2.500-3.500 4-2 6.500l1.500 2M15 6.500c-2 1-2.500 2.500-1.500 4" fill="none" stroke="#e57a24" strokeWidth="1.400" />
    <path d="M7.500 12.500h8.500M8 14.500h7.500M9 17h5.500M16.500 13c2 0 2 2.500-1 3M6.500 19.500c3 1.200 8 1.200 11 0" fill="none" stroke="#5382a1" strokeWidth="1.300" />
  </svg>
);

const WifiIcon = () => (
  <svg width="16" height="14" viewBox="0 0 16 14">
    <path d="M1 5.500a10 10 0 0114 0" fill="none" stroke="#7f7672" strokeWidth="1.300" />
    <path d="M3.300 8a6.700 6.700 0 019.400 0" fill="none" stroke="#a39b97" strokeWidth="1.300" />
    <path d="M5.500 10.200a3.600 3.600 0 015 0" fill="none" stroke="#fff" strokeWidth="1.400" />
    <circle cx="8" cy="12" r="1.500" fill="#fff" />
  </svg>
);

const MuteIcon = () => (
  <svg width="16" height="14" viewBox="0 0 16 14">
    <path d="M1 5h2.500L7 1.500v11L3.500 9H1z" fill="none" stroke="#fff" strokeWidth="1.200" />
    <path d="M10 5l4.500 4.500M14.500 5L10 9.500" stroke="#fff" strokeWidth="1.200" />
  </svg>
);

const BatteryIcon = () => (
  <svg width="17" height="14" viewBox="0 0 17 14">
    <rect x="1" y="2" width="13" height="10" rx="2" fill="none" stroke="#fff" strokeWidth="1.300" />
    <path d="M15.800 5v4" stroke="#fff" strokeWidth="1.500" /><path d="M3 4v6" stroke="#fff" />
  </svg>
);

/* ---------- data ---------- */

type Node = { level: number; open?: boolean; kind: IconKind; label: string; type?: string; tail?: string; selected?: boolean };

const f = (label: string, kind: IconKind = "java", selected = false): Node => ({ level: 3, kind, label, selected });

const projectTree: Node[] = [
  f("DashboardComponent.java"),
  f("ManageBatch.java"),
  f("ManageQuestions.java"),
  f("ManageQuiz.java"),
  f("ManageStudents.java"),
  f("Ranking.java"),
  { level: 2, open: true, kind: "package", label: "Component.Auth" },
  f("ForgetFrame.java", "main"),
  f("Login.java"),
  f("RecoveryPassword.java"),
  f("Register.java"),
  { level: 2, open: true, kind: "package", label: "Component.User" },
  f("LeaderBoard.java"),
  f("Profile.java"),
  f("QuizConsole.java", "main"),
  f("QuizPanel.java"),
  f("Result.java"),
  f("UserHome.java", "main"),
  { level: 2, open: true, kind: "package", label: "Home" },
  f("Home.java", "main", true),
  { level: 2, open: false, kind: "package", label: "dist" },
  { level: 1, open: false, kind: "testFolder", label: "Test Packages" },
  { level: 1, open: false, kind: "libFolder", label: "Libraries" },
  { level: 1, open: false, kind: "libFolder", label: "Test Libraries" },
];

const m = (label: string, kind: IconKind, type = "", tail = ""): Node => ({ level: 1, kind, label, type, tail });

const memberTree: Node[] = [
  { level: 0, open: true, kind: "class", label: "Home :: ", type: "JFrame" },
  m("Home()", "ctor"),
  m("initComponents()", "privMethod"),
  m("jButton1MouseClicked(", "privMethod", "MouseEvent", " evt)"),
  m("jButton2ActionPerformed(", "privMethod", "ActionEvent", " evt)"),
  m("jButton2MouseClicked(", "privMethod", "MouseEvent", " evt)"),
  m("jButton3ActionPerformed(", "privMethod", "ActionEvent", " evt)"),
  m("jButton3MouseClicked(", "privMethod", "MouseEvent", " evt)"),
  m("main(", "staticMethod", "String[]", " args)"),
  m("BATCH : ", "staticField", "String"),
  m("ID : ", "staticField", "int"),
  m("USER : ", "staticField", "String"),
  m("changeable : ", "privField", "JPanel"),
  m("jButton1 : ", "privField", "JButton"),
  m("jButton2 : ", "privField", "JButton"),
  m("jButton3 : ", "privField", "JButton"),
  m("jLabel1 : ", "privField", "JLabel"),
  m("jLabel2 : ", "privField", "JLabel"),
  m("jPanel1 : ", "privField", "JPanel"),
  m("jPanel2 : ", "privField", "JPanel"),
  m("jPanel3 : ", "privField", "JPanel"),
];

const menus = ["File", "Edit", "View", "Navigate", "Source", "Refactor", "Run", "Debug", "Profile", "Team", "Tools", "Window", "Help"];
const navItems = ["Dashboard", "Manage Quiz", "Manage Batch", "Manage Questions", "Assign Quiz", "Manage Students", "Ranking", "Logout"];
const columns = ["Id", "Name", "Batch", "points"];
const toppers = [
  ["6", "Eric", "CSE", "14"],
  ["3", "admin", "CSE", "10"],
  ["5", "daniel", "CSE", "2"],
  ["1", "11", "CSE", "-6"],
];

const Capitals = ({ text, cap }: { text: string; cap: number }) => (
  <>
    {text.split(" ").map((w, i) => (
      <React.Fragment key={w}>
        {i > 0 && " "}
        <Word $cap={cap}>{w}</Word>
      </React.Fragment>
    ))}
  </>
);

const TreeView = ({ nodes, scrolled }: { nodes: Node[]; scrolled?: boolean }) => (
  <Tree $scrolled={scrolled}>
    {nodes.map((n) => (
      <TreeRow key={n.label + n.level} $level={n.level} $selected={n.selected}>
        <Twisty>{n.open !== undefined && <Chevron dir={n.open ? "down" : "right"} />}</Twisty>
        <RowIcon><TreeIcon kind={n.kind} /></RowIcon>
        <RowLabel $selected={n.selected}>
          {n.label}
          {n.type && <Muted>{n.type}</Muted>}
          {n.tail}
        </RowLabel>
      </TreeRow>
    ))}
  </Tree>
);

export default function App() {
  return (
    <>
      <Global />
      <Desktop>
        <MenuBar>
          <MenuGroup>
            <NetBeansMark />
            {menus.map((label) => <MenuItem key={label}>{label}</MenuItem>)}
          </MenuGroup>
          <AppTitle>SmartQuizSystem - Apache NetBeans IDE 21</AppTitle>
          <MenuRight>
            <svg width="20" height="18" viewBox="0 0 20 18">
              <circle cx="7" cy="7" r="5" fill="#bfdfff" stroke="#3f7fc4" strokeWidth="1.500" />
              <path d="M14 7h5l-2.500 3z" fill="#000" />
            </svg>
            <IdeSearch placeholder="Search (Ctrl+I)" aria-label="Search (Ctrl+I)" />
            <WindowControl aria-label="Minimize"><svg width="10" height="10" viewBox="0 0 10 10"><path d="M0 4.500h10" {...stroke} /></svg></WindowControl>
            <WindowControl aria-label="Restore">
              <svg width="11" height="11" viewBox="0 0 11 11"><rect x=".5" y="2.500" width="8" height="8" rx="1.500" {...stroke} /><path d="M3 .5h5a2.500 2.500 0 012.500 2.500v5" {...stroke} /></svg>
            </WindowControl>
            <WindowControl aria-label="Close"><Cross size={11} color="#666" /></WindowControl>
          </MenuRight>
        </MenuBar>

        <ToolBar>
          <Grip />
          <ToolButton aria-label="New File"><NewFileIcon /></ToolButton>
          <ToolButton aria-label="New Project"><NewProjectIcon /></ToolButton>
          <ToolButton aria-label="Open Project"><OpenIcon /></ToolButton>
          <ToolButton aria-label="Save All" $dim><SaveAllIcon /></ToolButton>
          <Grip $lead />
          <ToolButton aria-label="Undo" $dim><UndoIcon /></ToolButton>
          <ToolButton aria-label="Redo" $dim><UndoIcon flip /></ToolButton>
        </ToolBar>

        <Body>
          <SideStrip>
            <svg width="10" height="10" viewBox="0 0 10 10"><path d="M.5 3.500h6v6h-6zM3 3V.5h6.500V7H7" {...stroke} /></svg>
            <SideTab><SideLabel>Files</SideLabel><FilesIcon /></SideTab>
            <SideTab><SideLabel>Services</SideLabel><ServicesIcon /></SideTab>
          </SideStrip>

          <LeftDock>
            <Panel>
              <TabStrip $active><Tab $active>Projects <Cross /></Tab></TabStrip>
              <TreeView nodes={projectTree} scrolled />
              <HScroll $full />
            </Panel>
            <Panel $topLine>
              <TabStrip $short><Tab>Navigator <Cross /></Tab></TabStrip>
              <FilterRow>
                <Combo aria-label="Navigator view"><option>Members</option></Combo>
                <Combo aria-label="Filter" disabled><option>&lt;empty&gt;</option></Combo>
              </FilterRow>
              <TreeView nodes={memberTree} />
              <HScroll />
              <FilterBar>
                <SplitterMark />
                <FilterButton aria-label="Show inherited members"><InheritIcon /></FilterButton>
                <FilterButton aria-label="Show fields" $on><SquareIcon /></FilterButton>
                <FilterButton aria-label="Show static members" $on><BarIcon /></FilterButton>
                <FilterButton aria-label="Show non-public members" $on><PadlockIcon /></FilterButton>
                <FilterButton aria-label="Show inner classes" $on><TreeIcon kind="class" /></FilterButton>
                <Divider $tight />
                <FilterButton aria-label="Fully qualified names"><SortClassIcon /></FilterButton>
                <Divider $tight />
                <FilterButton aria-label="Sort by source" $on><ArrowDownIcon /></FilterButton>
              </FilterBar>
            </Panel>
          </LeftDock>

          <RightDock>
            <Panel $topLine>
              <TabStrip $end $short>
                <Tab>Project SmartQuizSystem <Cross /></Tab>
                <TabActions>
                  <Chevron dir="left" color="#666" />
                  <Chevron dir="right" color="#aaa" />
                  <Chevron dir="down" color="#666" />
                  <svg width="10" height="10" viewBox="0 0 10 10"><path d="M.5.5h9v9h-9z" {...stroke} /></svg>
                </TabActions>
              </TabStrip>
              <EditorToolbar />
              <EditorArea>
                <CodeSheet>
                  <CodeLine $tone="#dedede" />
                  <CodeLine />
                  <CodeLine $tone="#f9f1e0" />
                </CodeSheet>
                <VScroll $thumb />
                <ErrorStripe>
                  <StripeBox />
                  <StripeMark />
                  <CaretMark />
                  <StripeMark />
                </ErrorStripe>
              </EditorArea>
            </Panel>
            <Panel>
              <TabStrip $end>
                <TabActions><svg width="10" height="10" viewBox="0 0 10 10"><path d="M0 8.500h10" {...stroke} /></svg></TabActions>
              </TabStrip>
              <EditorToolbar $tall />
              <EditorArea>
                <CodeSheet />
                <VScroll />
              </EditorArea>
            </Panel>
          </RightDock>
        </Body>

        <StatusBar>
          <span>SmartQuizSystem (run)</span>
          <Progress role="progressbar">running...</Progress>
          <svg width="32" height="9" viewBox="0 0 32 9"><path d="M2 .7l7.600 7.600M9.600.7L2 8.300" {...stroke} /></svg>
          <StatusCell $w={110}>19:22</StatusCell>
          <StatusCell $w={26}>INS</StatusCell>
          <Divider />
        </StatusBar>

        <TaskBar>
          <Weather>
            <Sun />
            <Lines $dim><span>102°F</span><span>Sunny</span></Lines>
          </Weather>
          <TaskIcons>
            <TaskButton aria-label="Start"><StartIcon /></TaskButton>
            <TaskSearch>
              <svg width="16" height="16" viewBox="0 0 16 16"><circle cx="6.500" cy="6.500" r="5.500" fill="none" stroke="#e8e6e2" strokeWidth="1.700" /><path d="M10.500 10.500l4.500 4.500" stroke="#e8e6e2" strokeWidth="1.800" /></svg>
              <TaskSearchInput placeholder="Search" aria-label="Search" />
              <SearchArt />
            </TaskSearch>
            <TaskButton aria-label="Copilot"><CopilotIcon /><PreBadge>PRE</PreBadge></TaskButton>
            <TaskButton aria-label="Task View"><TaskViewIcon /></TaskButton>
            <TaskButton aria-label="Store"><StoreIcon /></TaskButton>
            <TaskButton aria-label="Diamond"><DiamondIcon /></TaskButton>
            <TaskButton aria-label="File Explorer"><FolderIcon /><RunDot /></TaskButton>
            <TaskButton aria-label="Opera"><OperaIcon /><RunDot /></TaskButton>
            <TaskButton aria-label="XAMPP"><XamppIcon /><RunDot /></TaskButton>
            <TaskButton aria-label="Telegram" $tone="#45272b"><TelegramIcon /><Badge>..47</Badge><RunDot $tone="#f78f96" /></TaskButton>
            <TaskButton aria-label="NetBeans"><CubeIcon /><RunDot /></TaskButton>
            <TaskButton aria-label="Java" $tone="#40362a"><JavaIcon /><RunDot $wide $tone="#f4795f" /></TaskButton>
          </TaskIcons>
          <Tray>
            <svg width="12" height="8" viewBox="0 0 12 8"><path d="M1 6.500l5-5 5 5" fill="none" stroke="#fff" strokeWidth="1.500" /></svg>
            <TrayLang $align="center"><span>ENG</span><span>IN</span></TrayLang>
            <TrayGroup><WifiIcon /><MuteIcon /><BatteryIcon /></TrayGroup>
            <Lines $align="right"><span>02:33 PM</span><span>04-05-2024</span></Lines>
            <Bell>
              <svg width="14" height="18" viewBox="0 0 14 18"><path d="M7 1c3 0 5 2 5 5v4l2 4H0l2-4V6c0-3 2-5 5-5zM5 15h4c0 3-4 3-4 0z" fill="#f9a07c" /></svg>
            </Bell>
          </Tray>
        </TaskBar>

        <QuizWindow>
          <QuizTitleBar>
            <QuizTitle>Smart Quiz System</QuizTitle>
            <CloseBox aria-label="Close" />
          </QuizTitleBar>
          <QuizBody>
            <QuizNav>
              {navItems.map((label) => (
                <NavButton key={label} $danger={label === "Logout"} $focused={label === "Ranking"}>
                  <Capitals text={label} cap={15} />
                </NavButton>
              ))}
            </QuizNav>
            <QuizMain>
              <Heading><Capitals text="Toppers" cap={25} /></Heading>
              <TableView>
                <Table>
                  <thead><tr>{columns.map((c) => <Th key={c}>{c}</Th>)}</tr></thead>
                  <tbody>
                    {toppers.map((row) => (
                      <Tr key={row[0]}>{row.map((v, i) => <Td key={columns[i]}>{v}</Td>)}</Tr>
                    ))}
                  </tbody>
                </Table>
              </TableView>
            </QuizMain>
          </QuizBody>
        </QuizWindow>
      </Desktop>
    </>
  );
}
